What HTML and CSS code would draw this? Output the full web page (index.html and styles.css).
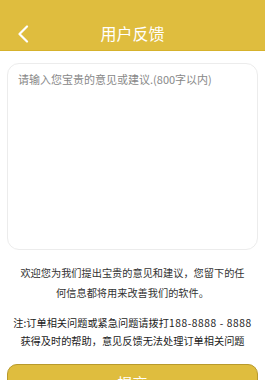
FILE: index.html
```html
<!DOCTYPE html>
<html lang="zh">
<head>
<meta charset="utf-8">
<link rel="stylesheet" href="styles.css">
</head>
<body>
<header class="bar">
  <svg class="back" width="12" height="18" viewBox="0 0 12 18"><path d="M10 1.5 L2.5 9 L10 16.5" fill="none" stroke="#fff" stroke-width="2.2" stroke-linecap="round" stroke-linejoin="round"/></svg>
  <h1 class="title">用户反馈</h1>
</header>
<main class="content">
  <div class="box">
    <textarea class="input" placeholder="请输入您宝贵的意见或建议.(800字以内)"></textarea>
  </div>
  <p class="thanks">欢迎您为我们提出宝贵的意见和建议，您留下的任何信息都将用来改善我们的软件。</p>
  <p class="note">注:订单相关问题或紧急问题请拨打<span class="num">188-8888 - 8888</span>获得及时的帮助，意见反馈无法处理订单相关问题</p>
  <button class="submit">提交</button>
</main>
</body>
</html>
```
FILE: styles.css
```css
* { box-sizing: border-box; }
html, body { margin: 0; padding: 0; background: #fff; }
body { font-family: "Noto Sans CJK SC", "Noto Sans", sans-serif; width: 265px; height: 380px; overflow: hidden; }
.bar {
  height: 51px;
  background: #dfbd3e;
  border-bottom: 1px solid #d6b22c;
  position: relative;
  display: flex;
  align-items: center;
  justify-content: center;
  padding-top: 16px;
}
.back { position: absolute; left: 17px; top: 25px; }
.title { margin: 0; font-size: 16px; font-weight: 400; color: #fff; line-height: 20px; }
.content { padding: 12px 7px 0 7px; }
.box {
  height: 187px;
  border: 1px solid #ececec;
  border-radius: 12px;
  padding: 7px 10px;
}
.input {
  width: 100%; height: 100%;
  border: none; outline: none; resize: none;
  font-family: inherit; font-size: 11px; line-height: 16px;
  color: #333; padding: 0; background: transparent;
}
.input::placeholder { color: #888; }
.thanks {
  margin: 13px 0 0 0;
  padding: 0 11px;
  font-size: 10.2px; line-height: 20px; color: #333; text-align: center;
}
.note {
  margin: 11px 0 0 0;
  padding: 0 3px;
  font-size: 10.2px; line-height: 18px; color: #222; text-align: center;
}
.num { letter-spacing: 0.6px; }
.submit {
  display: block;
  margin-top: 14px;
  width: 100%;
  height: 36px;
  background: #dfbd3e;
  border: 1px solid #b89a2c;
  border-radius: 10px;
  color: #fff;
  font-family: inherit;
  font-size: 15px;
  padding: 0;
}
```
